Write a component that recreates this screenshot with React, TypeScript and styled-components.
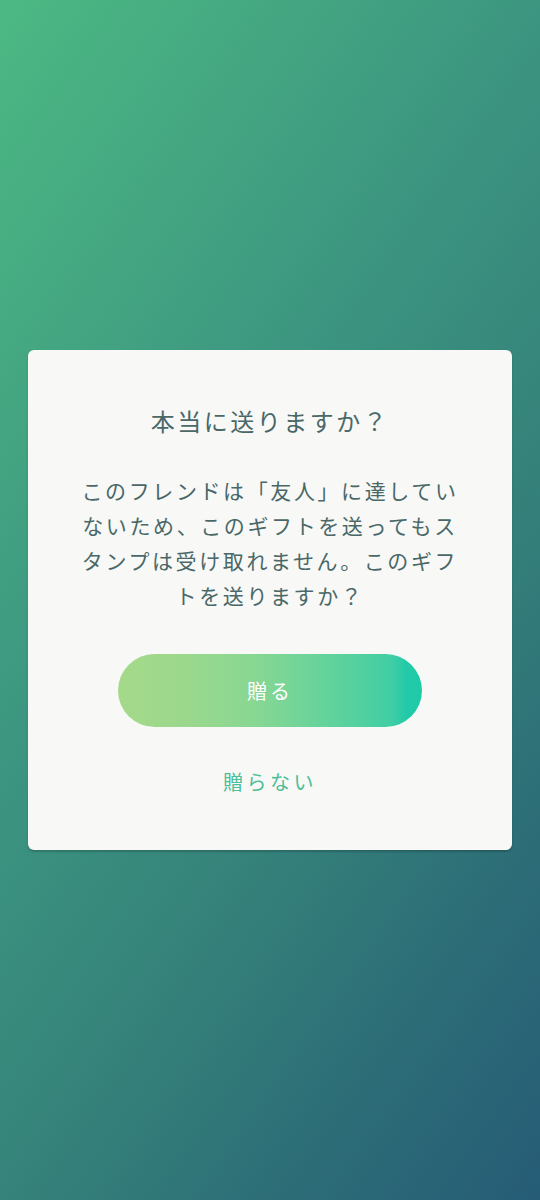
import styled, { createGlobalStyle } from 'styled-components'

const GlobalStyle = createGlobalStyle`
  html, body {
    margin: 0;
    padding: 0;
  }
  body {
    font-family: 'Noto Sans CJK JP', 'Noto Sans', sans-serif;
  }
`

const Screen = styled.div`
  min-height: 100vh;
  display: flex;
  align-items: center;
  justify-content: center;
  background: linear-gradient(125deg, #4cb983 0%, #3c9580 40%, #35827a 62%, #2c6c77 82%, #265c76 100%);
`

const Card = styled.div`
  width: 484px;
  box-sizing: border-box;
  padding: 55px 0 53px;
  display: flex;
  flex-direction: column;
  align-items: center;
  background: #f8f9f7;
  border-radius: 6px;
  box-shadow: 0 2px 2px rgba(0, 0, 0, 0.18);
`

const Title = styled.h2`
  margin: 0;
  font-size: 24px;
  font-weight: 400;
  line-height: 32px;
  letter-spacing: 2.5px;
  color: #4a6868;
`

const Message = styled.p`
  margin: 36px 0 0;
  width: 390px;
  font-size: 21px;
  line-height: 35px;
  letter-spacing: 2.6px;
  text-align: center;
  color: #4a6868;
`

const PrimaryButton = styled.button`
  margin-top: 41px;
  width: 304px;
  height: 73px;
  border: none;
  border-radius: 37px;
  font-family: inherit;
  font-size: 20px;
  letter-spacing: 3px;
  color: #ffffff;
  background: linear-gradient(90deg, #a5d98a 0%, #9cd88c 20%, #88d793 45%, #5ed29d 72%, #40cea4 90%, #22caa9 95%, #1fcaa9 100%);
  cursor: pointer;
`

const TextButton = styled.button`
  margin-top: 40px;
  height: 30px;
  padding: 0;
  border: none;
  background: none;
  font-family: inherit;
  font-size: 20px;
  line-height: 30px;
  letter-spacing: 3.5px;
  color: #4dbe97;
  cursor: pointer;
`

export default function App() {
  return (
    <>
      <GlobalStyle />
      <Screen>
        <Card>
          <Title>本当に送りますか？</Title>
          <Message>
            このフレンドは「友人」に達していないため、このギフトを送ってもスタンプは受け取れません。このギフトを送りますか？
          </Message>
          <PrimaryButton>贈る</PrimaryButton>
          <TextButton>贈らない</TextButton>
        </Card>
      </Screen>
    </>
  )
}
